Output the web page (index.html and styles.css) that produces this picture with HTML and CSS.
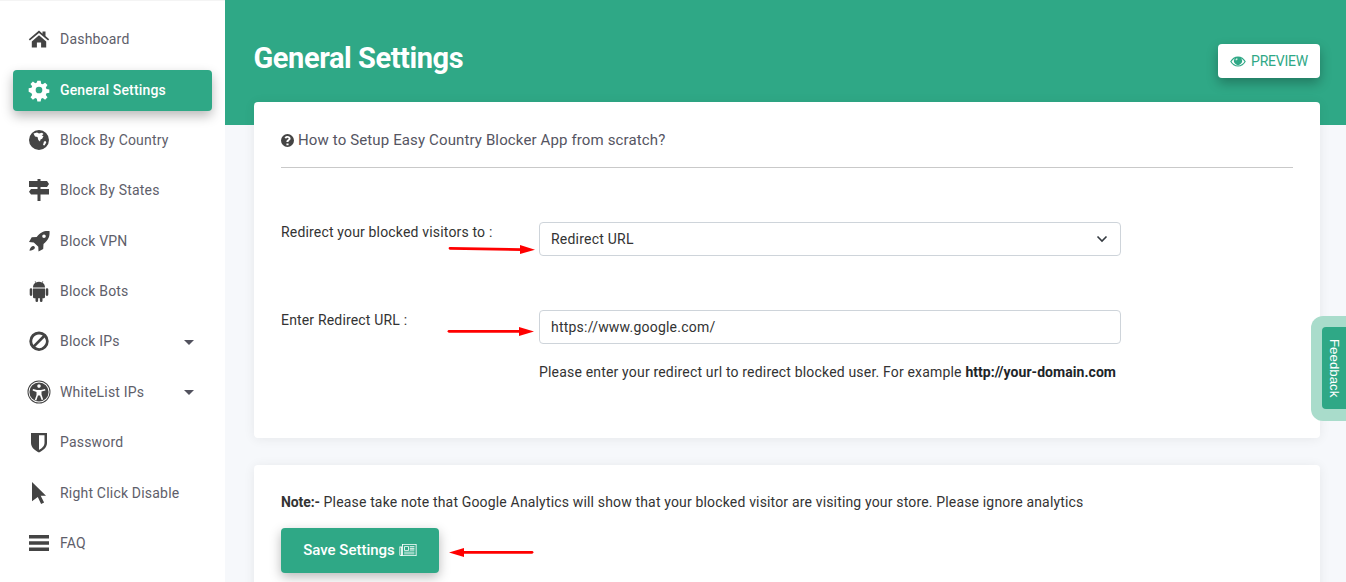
FILE: index.html
```html
<!DOCTYPE html>
<html lang="en">
<head>
<meta charset="utf-8">
<title>General Settings</title>
<link rel="stylesheet" href="styles.css">
</head>
<body>
<div class="app">
  <nav class="sidebar">
    <a class="nav-item"><svg class="nav-icon" viewBox="0 0 20 22"><path d="M10 2.500-.2 11.200l1.100 1.300L10 4.900l9.100 7.600 1.100-1.300-3.700-3.100V3.500h-3v2.300zM2.800 13.400V19.500h5.100v-5h4.200v5h5.100v-6.100L10 7.300z"/></svg><span>Dashboard</span></a>
    <a class="nav-item active"><svg class="nav-icon" viewBox="0 0 20 22"><path fill-rule="evenodd" transform="translate(0 1) scale(.8333)" d="M10 1h4l.6 3.400 1.900.8 2.800-2 2.900 2.900-2 2.800.8 1.900 3.400.6v4l-3.400.6-.8 1.900 2 2.800-2.900 2.900-2.800-2-1.900.8-.6 3.400h-4l-.6-3.400-1.900-.8-2.800 2-2.900-2.900 2-2.800-.8-1.900L-.4 14v-4l3.400-.6.8-1.900-2-2.800 2.900-2.900 2.800 2 1.900-.8zM12 8a4 4 0 1 0 0 8 4 4 0 0 0 0-8z"/></svg><span>General Settings</span></a>
    <a class="nav-item"><svg class="nav-icon" viewBox="0 0 20 22"><path fill-rule="evenodd" d="M10 1a10 10 0 1 0 0 20 10 10 0 0 0 0-20zM4.500 4.500 8 3.500l2 1 3-.8 1.500 1.300-1.800 1.500L14.500 7l-1.300 2.800-1.700.7-.5 2-1.700-1.500L8.500 8 6 7.500zM15 12.500l1.500-.5 .8 1.500-1.800 3-1.500-.5z"/></svg><span>Block By Country</span></a>
    <a class="nav-item"><svg class="nav-icon" viewBox="0 0 20 22"><path d="M8.500 0h3v2H18l2 3-2 3h-6.500v2H20v5.500h-8.500V22h-3V15.500H2L0 12.750 2 10h6.500V8H0V2h8.500z"/></svg><span>Block By States</span></a>
    <a class="nav-item"><svg class="nav-icon" viewBox="0 0 20 22"><path fill-rule="evenodd" d="M20.500 1C21 6.500 19.500 10 14.500 14l-.3 5L9.500 21.500l-.2-4.700-4.500-4.400L0 12l2.700-4.800 5-.2C11.500 2 15 .5 20.500 1zM15 4.500a1.800 1.800 0 1 0 0 3.600 1.800 1.800 0 0 0 0-3.600zM3.800 16c1.300-.5 2.500 1 2 2.200C5 20 2.500 20.500.5 20.800.6 19 1.800 16.700 3.800 16z"/></svg><span>Block VPN</span></a>
    <a class="nav-item"><svg class="nav-icon" viewBox="0 0 20 22"><path d="M4 7.500C4 5.300 5 3.700 6.500 2.800L5.700 1.300l.5-.3L7 2.500a6.500 6.500 0 0 1 6 0l.8-1.500.5.300-.8 1.500C15 3.700 16 5.300 16 7.500zM4 8.500h12V17a1.300 1.300 0 0 1-1.300 1.300H13.500v2.400a1.300 1.300 0 0 1-2.600 0v-2.400H9.100v2.400a1.300 1.300 0 0 1-2.600 0v-2.400H5.300A1.300 1.300 0 0 1 4 17zM2 8.300a1.300 1.300 0 0 1 1.300 1.300v5a1.300 1.300 0 0 1-2.600 0v-5A1.300 1.300 0 0 1 2 8.300zM18 8.300a1.300 1.300 0 0 1 1.300 1.300v5a1.300 1.300 0 0 1-2.600 0v-5A1.300 1.300 0 0 1 18 8.300z"/></svg><span>Block Bots</span></a>
    <a class="nav-item"><svg class="nav-icon" viewBox="0 0 20 22"><path fill-rule="evenodd" d="M10 1.500a9.700 9.700 0 1 0 0 19.400 9.700 9.700 0 0 0 0-19.400zm0 3a6.700 6.700 0 0 1 3.700 1.100l-9.300 9.300A6.700 6.700 0 0 1 10 4.500zm5.600 3A6.700 6.700 0 0 1 6.300 16.800z"/></svg><span>Block IPs</span><i class="caret"></i></a>
    <a class="nav-item"><svg class="nav-icon" viewBox="0 0 20 22"><path fill-rule="evenodd" d="M10-.5a11.500 11.500 0 1 0 0 23 11.500 11.500 0 0 0 0-23zm0 1a10.500 10.500 0 1 1 0 21 10.500 10.500 0 0 1 0-21zm0 .9a9.600 9.600 0 1 0 0 19.200 9.600 9.600 0 0 0 0-19.200zm0 1.900a1.800 1.800 0 1 1 0 3.600 1.800 1.800 0 0 1 0-3.600zM4 8l4 1h4l4-1 .4 1.400-3.900 1.200v3l1.700 4.800-1.500.5L11 14.500H9l-1.700 4.900-1.500-.5 1.700-4.800v-3L3.600 9.400z"/></svg><span>WhiteList IPs</span><i class="caret"></i></a>
    <a class="nav-item"><svg class="nav-icon" viewBox="0 0 20 22"><path fill-rule="evenodd" d="M2 2h16v10c0 4.500-4 7.500-8 9.500C6 19.500 2 16.500 2 12zm8 2.300v14.700c2.700-1.600 5.500-3.900 5.500-7V4.300z"/></svg><span>Password</span></a>
    <a class="nav-item"><svg class="nav-icon" viewBox="0 0 20 22"><path d="M3 0 17 13.700h-5.300l3.400 6.800-3 1.500-3.300-7L3 19.300z"/></svg><span>Right Click Disable</span></a>
    <a class="nav-item"><svg class="nav-icon" viewBox="0 0 20 22"><path d="M0 3h20v3.500H0zM0 9.300h20v3.500H0zM0 15.600h20v3.500H0z"/></svg><span>FAQ</span></a>
  </nav>

  <main class="main">
    <header class="banner">
      <h1>General Settings</h1>
      <a class="preview-btn"><svg class="preview-icon" viewBox="0 0 24 16"><path fill-rule="evenodd" d="M12 .5C7 .5 2.800 3.400.3 8c2.500 4.600 6.700 7.500 11.700 7.500s9.200-2.900 11.700-7.500C21.200 3.400 17 .5 12 .5zM2.300 8A14 14 0 0 1 7.500 3.200a6 6 0 1 0 9 0A14 14 0 0 1 21.700 8 12 12 0 0 1 12 14 12 12 0 0 1 2.300 8zM9.500 3.500a2 2 0 0 1 2.500 1 2.500 2.500 0 0 0-2.800 2.500 2 2 0 0 1-.7-1.500 2 2 0 0 1 1-2z"/></svg>PREVIEW</a>
    </header>

    <section class="card card-form">
      <p class="help-title"><svg class="help-icon" viewBox="1 1 22 22"><path fill-rule="evenodd" d="M12 1a11 11 0 1 0 0 22 11 11 0 0 0 0-22zm-1.800 16h3.600v3h-3.600zM12 4.500c3 0 5.200 1.800 5.200 4.300 0 2-1.200 3-2.500 3.800-.8.500-1 .9-1 1.900h-3.500c0-2 .5-3 1.900-3.800 1-.6 1.800-1 1.800-1.900 0-.8-.8-1.300-1.800-1.300s-1.800.5-2.600 1.500L7 7c1.200-1.600 2.800-2.500 5-2.500z"/></svg>How to Setup Easy Country Blocker App from scratch?</p>
      <div class="form-row form-row-first">
        <label class="form-label">Redirect your blocked visitors to :</label>
        <div class="field">Redirect URL<svg class="chevron" viewBox="0 0 12 8"><path d="M1.500 1.500 6 6l4.500-4.500" fill="none" stroke="#343a40" stroke-width="1.600"/></svg></div>
      </div>
      <div class="form-row form-row-second">
        <label class="form-label">Enter Redirect URL :</label>
        <div>
          <div class="field">https://www.google.com/</div>
          <p class="field-hint">Please enter your redirect url to redirect blocked user. For example <b>http://your-domain.com</b></p>
        </div>
      </div>
    </section>

    <section class="card card-note">
      <p class="note"><b>Note:-</b> Please take note that Google Analytics will show that your blocked visitor are visiting your store. Please ignore analytics</p>
      <a class="save-btn">Save Settings <svg class="save-icon" viewBox="0 0 20 14"><path fill-rule="evenodd" d="M3 0h17v14H1.500A1.500 1.500 0 0 1 0 12.500V3h3zm1 1v11.500a1.500 1.500 0 0 1-.3 .5H19V1zM1 4v8.500a.5.500 0 0 0 1 0V4zm4.500-1.500H11V8H5.500zm1 1V7H10V3.500zm5.500-1h5.500v1H12zm0 2h5.500v1H12zm0 2h5.500v1H12zM5.500 9h12v1h-12zm0 2h12v1h-12z"/></svg></a>
    </section>
  </main>
</div>

<svg class="arrows" viewBox="0 0 1346 582" aria-hidden="true">
  <path class="arrow-line" d="M450 248.300 L522 249.700"/>
  <path class="arrow-head" d="M520 245 L535 249.800 L520 254z"/>
  <path class="arrow-line" d="M449 331.300 L521 331.300"/>
  <path class="arrow-head" d="M519 327 L534 331.400 L519 336z"/>
  <path class="arrow-line" d="M532 552.300 L462 552.300"/>
  <path class="arrow-head" d="M464 548 L449 552.400 L464 557z"/>
</svg>

<aside class="feedback"><span class="feedback-tab">Feedback</span></aside>
</body>
</html>
```

FILE: styles.css
```css
* { box-sizing: border-box; }
html, body { margin: 0; height: 100%; overflow: hidden; }
body {
  font-family: Roboto, "Liberation Sans", sans-serif;
  font-size: 14px;
  color: #212529;
  background: #f6f8fb;
}
.app { display: flex; height: 582px; }

.sidebar {
  width: 225px;
  flex: none;
  background: #fff;
  padding: 17.720px 13px 0;
  display: flex;
  flex-direction: column;
  gap: 9.390px;
  border-top: 1px solid #f4f4f4;
}
.nav-item {
  position: relative;
  display: flex;
  align-items: center;
  height: 41px;
  flex: none;
  padding-left: 16px;
  border-radius: 4px;
  color: #5e5e6a;
  letter-spacing: .2px;
}
.nav-item span { margin-left: 11px; }
.nav-icon { width: 20px; height: 22px; fill: #444; flex: none; overflow: visible; }
.active {
  margin: .43px 0 -.43px;
  background: #2fa886;
  color: #fff;
  font-weight: 500;
  letter-spacing: .15px;
  box-shadow: 0 5px 12px rgba(0, 0, 0, .28);
}
.active .nav-icon { fill: #fff; }
.caret {
  position: absolute;
  right: 18px;
  top: 19px;
  border-left: 5px solid transparent;
  border-right: 5px solid transparent;
  border-top: 5px solid #52525e;
}

.main { flex: 1; min-width: 0; height: 582px; overflow: hidden; }
.banner {
  height: 125px;
  background: #2fa886;
  display: flex;
  align-items: flex-start;
  justify-content: space-between;
  padding: 0 26px 0 29px;
  margin-bottom: -23px;
}
.banner h1 {
  margin: 40px 0 0 -.5px;
  font-size: 29px;
  line-height: 36px;
  font-weight: 700;
  letter-spacing: -.42px;
  color: #fff;
}
.preview-btn {
  margin-top: 44px;
  width: 102px;
  height: 34px;
  background: #fff;
  border-radius: 4px;
  color: #2fa886;
  display: flex;
  align-items: center;
  justify-content: center;
  font-size: 14px;
  letter-spacing: -.25px;
  box-shadow: 0 5px 12px rgba(0, 0, 0, .28);
}
.preview-icon { width: 16px; height: 11px; fill: #2fa886; margin-right: 5px; }

.card {
  margin: 0 26px 0 29px;
  background: #fff;
  border-radius: 4px;
  padding: 0 27px;
  box-shadow: 0 1px 12px rgba(0, 0, 0, .07);
}
.card-form { height: 336px; margin-bottom: 27px; position: relative; }
.help-title {
  margin: 0;
  height: 66px;
  padding-top: 28px;
  line-height: 20px;
  font-size: 15px;
  letter-spacing: .13px;
  color: #555562;
  border-bottom: 1px solid #c9c9c9;
  display: flex;
  align-items: flex-start;
}
.help-icon { width: 13px; height: 13px; fill: #444; margin: 4px 4px 0 0; flex: none; }
.form-row { display: grid; grid-template-columns: 258px 582px; }
.form-row-first { margin-top: 54px; }
.form-row-second { margin-top: 54px; }
.form-label { padding-top: 1px; line-height: 18px; color: #333; letter-spacing: .17px; }
.field {
  height: 34px;
  border: 1px solid #ced4da;
  border-radius: 4px;
  padding: 0 11px 1px;
  display: flex;
  align-items: center;
  justify-content: space-between;
  color: #333;
  letter-spacing: .22px;
}
.chevron { width: 12px; height: 8px; margin-right: 1px; }
.field-hint { margin: 18px 0 0; line-height: 20px; color: #333; letter-spacing: .18px; }
.field-hint b { color: #212529; font-weight: 700; letter-spacing: .05px; }

.card-note { height: 160px; padding-top: 27px; }
.note { margin: 0; line-height: 20px; color: #333; letter-spacing: .163px; }
.note b { font-weight: 700; letter-spacing: -.1px; }
.save-btn {
  margin-top: 16px;
  width: 158px;
  height: 45px;
  padding-bottom: 1px;
  display: flex;
  align-items: center;
  justify-content: center;
  gap: 4px;
  border-radius: 4px;
  background: #2fa886;
  color: #fff;
  font-size: 15px;
  font-weight: 500;
  box-shadow: 0 4px 12px rgba(0, 0, 0, .28);
}
.save-icon { width: 18px; height: 12px; fill: #fff; }

.arrows { position: absolute; left: 0; top: 0; width: 1346px; height: 582px; pointer-events: none; }
.arrow-line { fill: none; stroke: #f00; stroke-width: 2.800px; stroke-linecap: round; }
.arrow-head { fill: #f00; }

.feedback {
  position: absolute;
  right: 0;
  top: 316px;
  width: 35px;
  height: 105px;
  padding: 11px 0 12px 11px;
  background: #a9dccb;
  border-radius: 12px 0 0 12px;
}
.feedback-tab {
  display: flex;
  align-items: center;
  justify-content: center;
  width: 100%;
  height: 100%;
  padding-left: 1px;
  background: #2fa886;
  border-radius: 4px 0 0 4px;
  color: #fff;
  writing-mode: vertical-rl;
  font-family: "Liberation Sans", Arial, sans-serif;
  font-size: 13.300px;
}
```
